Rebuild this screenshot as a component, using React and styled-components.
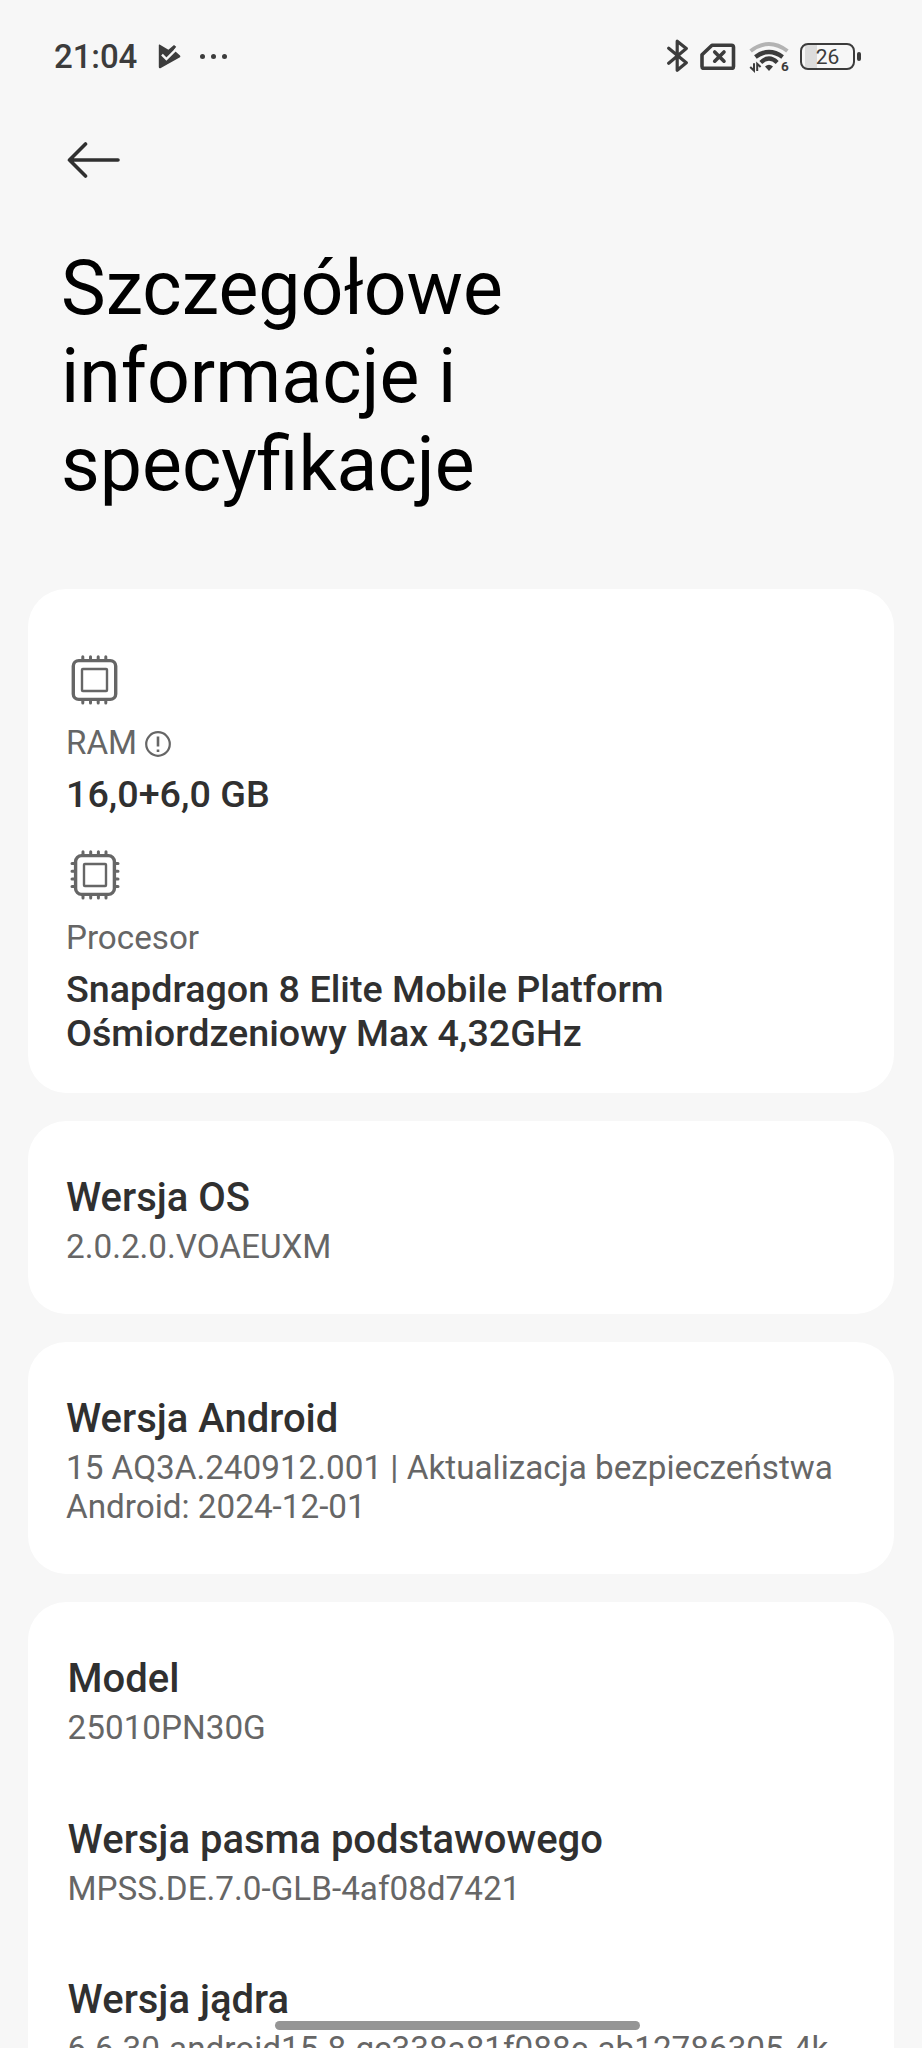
import React from "react";
import styled, { createGlobalStyle } from "styled-components";

const GlobalStyle = createGlobalStyle`
  * {
    box-sizing: border-box;
  }
  body {
    margin: 0;
    background: #f7f7f7;
    font-family: Roboto, "Liberation Sans", sans-serif;
  }
`;

function PlayIcon() {
  return (
    <svg width="24" height="25" viewBox="0 0 24 25">
      <path
        d="M1.6 0.6L10.4 5.8L16 0.9L18.2 2.8L15.8 6L22 11.4Q22.8 12.3 22 13.2L2.4 24.2Q0.8 24.6 0.8 23V1.2Q0.8 0.3 1.6 0.6Z"
        fill="#3c3c3c"
      />
      <path d="M4 10.6L8.4 15L18.6 4.8" fill="none" stroke="#f7f7f7" strokeWidth="2.4" />
    </svg>
  );
}

function BluetoothIcon() {
  return (
    <svg width="22" height="34" viewBox="0 0 22 34">
      <path
        d="M1.7 9.2L19.3 23.7L10.2 31.2V2.2L19.3 9.6L1.7 24.2"
        fill="none"
        stroke="#3c3c3c"
        strokeWidth="3.2"
        strokeLinejoin="round"
        strokeLinecap="round"
      />
    </svg>
  );
}

function SimIcon() {
  return (
    <svg width="36" height="28" viewBox="0 0 36 28" fill="none" stroke="#3c3c3c">
      <path
        d="M12 3.2H31.5Q33.5 3.2 33.5 5.2V24.6Q33.5 26.4 31.5 26.4H4Q2 26.4 2 24.6V12.8Z"
        strokeWidth="3.6"
        strokeLinejoin="round"
      />
      <path d="M14.7 9.9L24 19.2M24 9.9L14.7 19.2" strokeWidth="3.6" strokeLinecap="round" />
    </svg>
  );
}

function WifiIcon() {
  return (
    <svg width="41" height="33" viewBox="0 0 41 33" fill="none" stroke="#3c3c3c">
      <path d="M2.6 11Q21 -3 39.4 11" stroke="#b3b3b3" strokeWidth="4" />
      <path d="M7.4 17Q21 7 34.6 17" strokeWidth="4.4" />
      <path d="M12.8 22.4Q21 14.6 29.2 22.4" strokeWidth="4.2" />
      <path d="M17 26.6Q21 22.8 25 26.6L21 31Z" fill="#3c3c3c" stroke="none" />
      <path d="M6 23.2V30.6L2.2 27M9.2 31V23.8L12.6 27" strokeWidth="2" />
      <text x="33" y="31.4" fontSize="13.5" fontWeight="700" fill="#3c3c3c" stroke="none">
        6
      </text>
    </svg>
  );
}

// "sides" adds the pins on the left and right edges
function ChipIcon({ sides }) {
  const pins = [11, 18.7, 26.4, 34];
  return (
    <svg width="50" height="50" viewBox="0 0 50 50" fill="none" stroke="#666666">
      {sides ? (
        <>
          <rect x="5.6" y="5.6" width="38.8" height="38.8" rx="6" strokeWidth="3.4" />
          <rect x="14" y="14" width="22" height="22" rx="0.8" strokeWidth="2.4" />
          {pins.map((p) => (
            <path
              key={p}
              d={`M${p + 2} 1.8V5M${p + 2} 45V48M2 ${p + 2.5}H5M45 ${p + 2.5}H48`}
              strokeWidth="3"
              strokeLinecap="round"
            />
          ))}
        </>
      ) : (
        <>
          <rect x="3.3" y="5.6" width="42.4" height="38.8" rx="5.5" strokeWidth="3.4" />
          <rect x="12" y="14" width="25" height="22" rx="0.8" strokeWidth="2.4" />
          {pins.map((p) => (
            <path
              key={p}
              d={`M${p + 1.8} 1.8V5M${p + 1.8} 45V48`}
              strokeWidth="3"
              strokeLinecap="round"
            />
          ))}
        </>
      )}
    </svg>
  );
}

function InfoIcon() {
  return (
    <svg width="26" height="26" viewBox="0 0 26 26" fill="none" stroke="#666666">
      <circle cx="13" cy="13" r="11.8" strokeWidth="2.2" />
      <path d="M13 5.6V15.4M13 18.4V21" strokeWidth="2.6" />
    </svg>
  );
}

export default function App() {
  return (
    <Screen>
      <GlobalStyle />
      <StatusBar>
        <Time>21:04</Time>
        <PlayIcon />
        <Dots>
          <i />
          <i />
          <i />
        </Dots>
        <StatusRight>
          <BluetoothIcon />
          <SimIcon />
          <WifiIcon />
          <Battery>
            <BatteryBody>26</BatteryBody>
            <BatteryTip />
          </Battery>
        </StatusRight>
      </StatusBar>

      <BackButton aria-label="Wstecz">
        <svg width="54" height="38" viewBox="0 0 54 38" fill="none" stroke="#303030">
          <path
            d="M51 19H2.5M18.5 3L2.5 19L18.5 35"
            strokeWidth="3.6"
            strokeLinecap="round"
            strokeLinejoin="round"
          />
        </svg>
      </BackButton>

      <Title>
        Szczegółowe
        <br />
        informacje i<br />
        specyfikacje
      </Title>

      <Cards>
        <HardwareCard>
          <Hardware>
            <ChipIcon />
            <Label>
              RAM <InfoIcon />
            </Label>
            <Value>16,0+6,0 GB</Value>
          </Hardware>
          <Hardware>
            <ChipIcon sides />
            <Label>Procesor</Label>
            <Value>
              Snapdragon 8 Elite Mobile Platform
              <br />
              Ośmiordzeniowy Max 4,32GHz
            </Value>
          </Hardware>
        </HardwareCard>

        <Card>
          <Row>
            <h2>Wersja OS</h2>
            <p>2.0.2.0.VOAEUXM</p>
          </Row>
        </Card>

        <Card>
          <Row>
            <h2>Wersja Android</h2>
            <p>
              15 AQ3A.240912.001 | Aktualizacja bezpieczeństwa
              <br />
              Android: 2024-12-01
            </p>
          </Row>
        </Card>

        <Card $inset>
          <Row>
            <h2>Model</h2>
            <p>25010PN30G</p>
          </Row>
          <Row>
            <h2>Wersja pasma podstawowego</h2>
            <p>MPSS.DE.7.0-GLB-4af08d7421</p>
          </Row>
          <Row>
            <h2>Wersja jądra</h2>
            <p>6.6.30-android15-8-gc338a81f088e-ab12786305-4k</p>
          </Row>
        </Card>
      </Cards>
      <HomeBar />
    </Screen>
  );
}

const Screen = styled.div`
  position: relative;
  width: 922px;
  height: 2048px;
  overflow: hidden;
  background: #f7f7f7;
`;

const StatusBar = styled.header`
  display: flex;
  align-items: center;
  height: 112px;
  padding: 0 61px 0 54px;
  color: #3c3c3c;
`;

const Time = styled.span`
  width: 104px;
  font-size: 33px;
  font-weight: 500;
  letter-spacing: -0.1px;
`;

const Dots = styled.div`
  display: flex;
  gap: 6px;
  margin-left: 18px;

  i {
    width: 5px;
    height: 5px;
    border-radius: 50%;
    background: #3c3c3c;
  }
`;

const StatusRight = styled.div`
  display: flex;
  align-items: center;
  margin-left: auto;
  gap: 11.5px;
`;

const Battery = styled.div`
  display: flex;
  align-items: center;
  gap: 2px;
`;

const BatteryBody = styled.div`
  width: 55px;
  height: 27px;
  border: 2.5px solid #3c3c3c;
  border-radius: 8px;
  background: linear-gradient(90deg, #dcdcdc 12px, transparent 12px) 3px 0 / 100% 100% no-repeat;
  font-size: 21px;
  line-height: 24px;
  text-align: center;
`;

const BatteryTip = styled.div`
  width: 4px;
  height: 9px;
  border-radius: 2px;
  background: #3c3c3c;
`;

const BackButton = styled.button`
  display: block;
  margin: 29px 0 0 67px;
  padding: 0;
  border: 0;
  background: none;

  svg {
    display: block;
  }
`;

const Title = styled.h1`
  margin: 65px 61px 0;
  color: #000;
  font-size: 75.2px;
  font-weight: 400;
  line-height: 88px;
`;

const Cards = styled.main`
  display: flex;
  flex-direction: column;
  gap: 28px;
  margin: 81.4px 28px 0;
`;

const Card = styled.section`
  padding: 53px ${(props) => (props.$inset ? 39.6 : 38)}px 48px;
  border-radius: 38px;
  background: #fff;
`;

const HardwareCard = styled(Card)`
  display: flex;
  flex-direction: column;
  gap: 33px;
  padding-top: 66px;
  padding-bottom: 37.8px;
`;

const Hardware = styled.div`
  svg {
    display: block;
  }
  > svg {
    margin-left: 4px;
  }
`;

const Label = styled.div`
  display: flex;
  align-items: center;
  gap: 8px;
  margin-top: 18px;
  color: #666;
  font-size: 33.2px;
  line-height: 39px;

  svg {
    margin-top: 2px;
  }
`;

const Value = styled.div`
  margin-top: 10px;
  color: #303030;
  font-size: 37.7px;
  font-weight: 500;
  line-height: 44.4px;
`;

const Row = styled.div`
  & + & {
    margin-top: 68.3px;
  }
  h2 {
    margin: 0;
    color: #303030;
    font-size: 40px;
    font-weight: 500;
    line-height: 47px;
  }
  p {
    margin: 6px 0 0;
    color: #666;
    font-size: 33.25px;
    line-height: 39px;
    white-space: nowrap;
  }
`;

const HomeBar = styled.div`
  position: absolute;
  left: 275px;
  top: 2021px;
  width: 365px;
  height: 9px;
  border-radius: 5px;
  background: #959595;
`;
